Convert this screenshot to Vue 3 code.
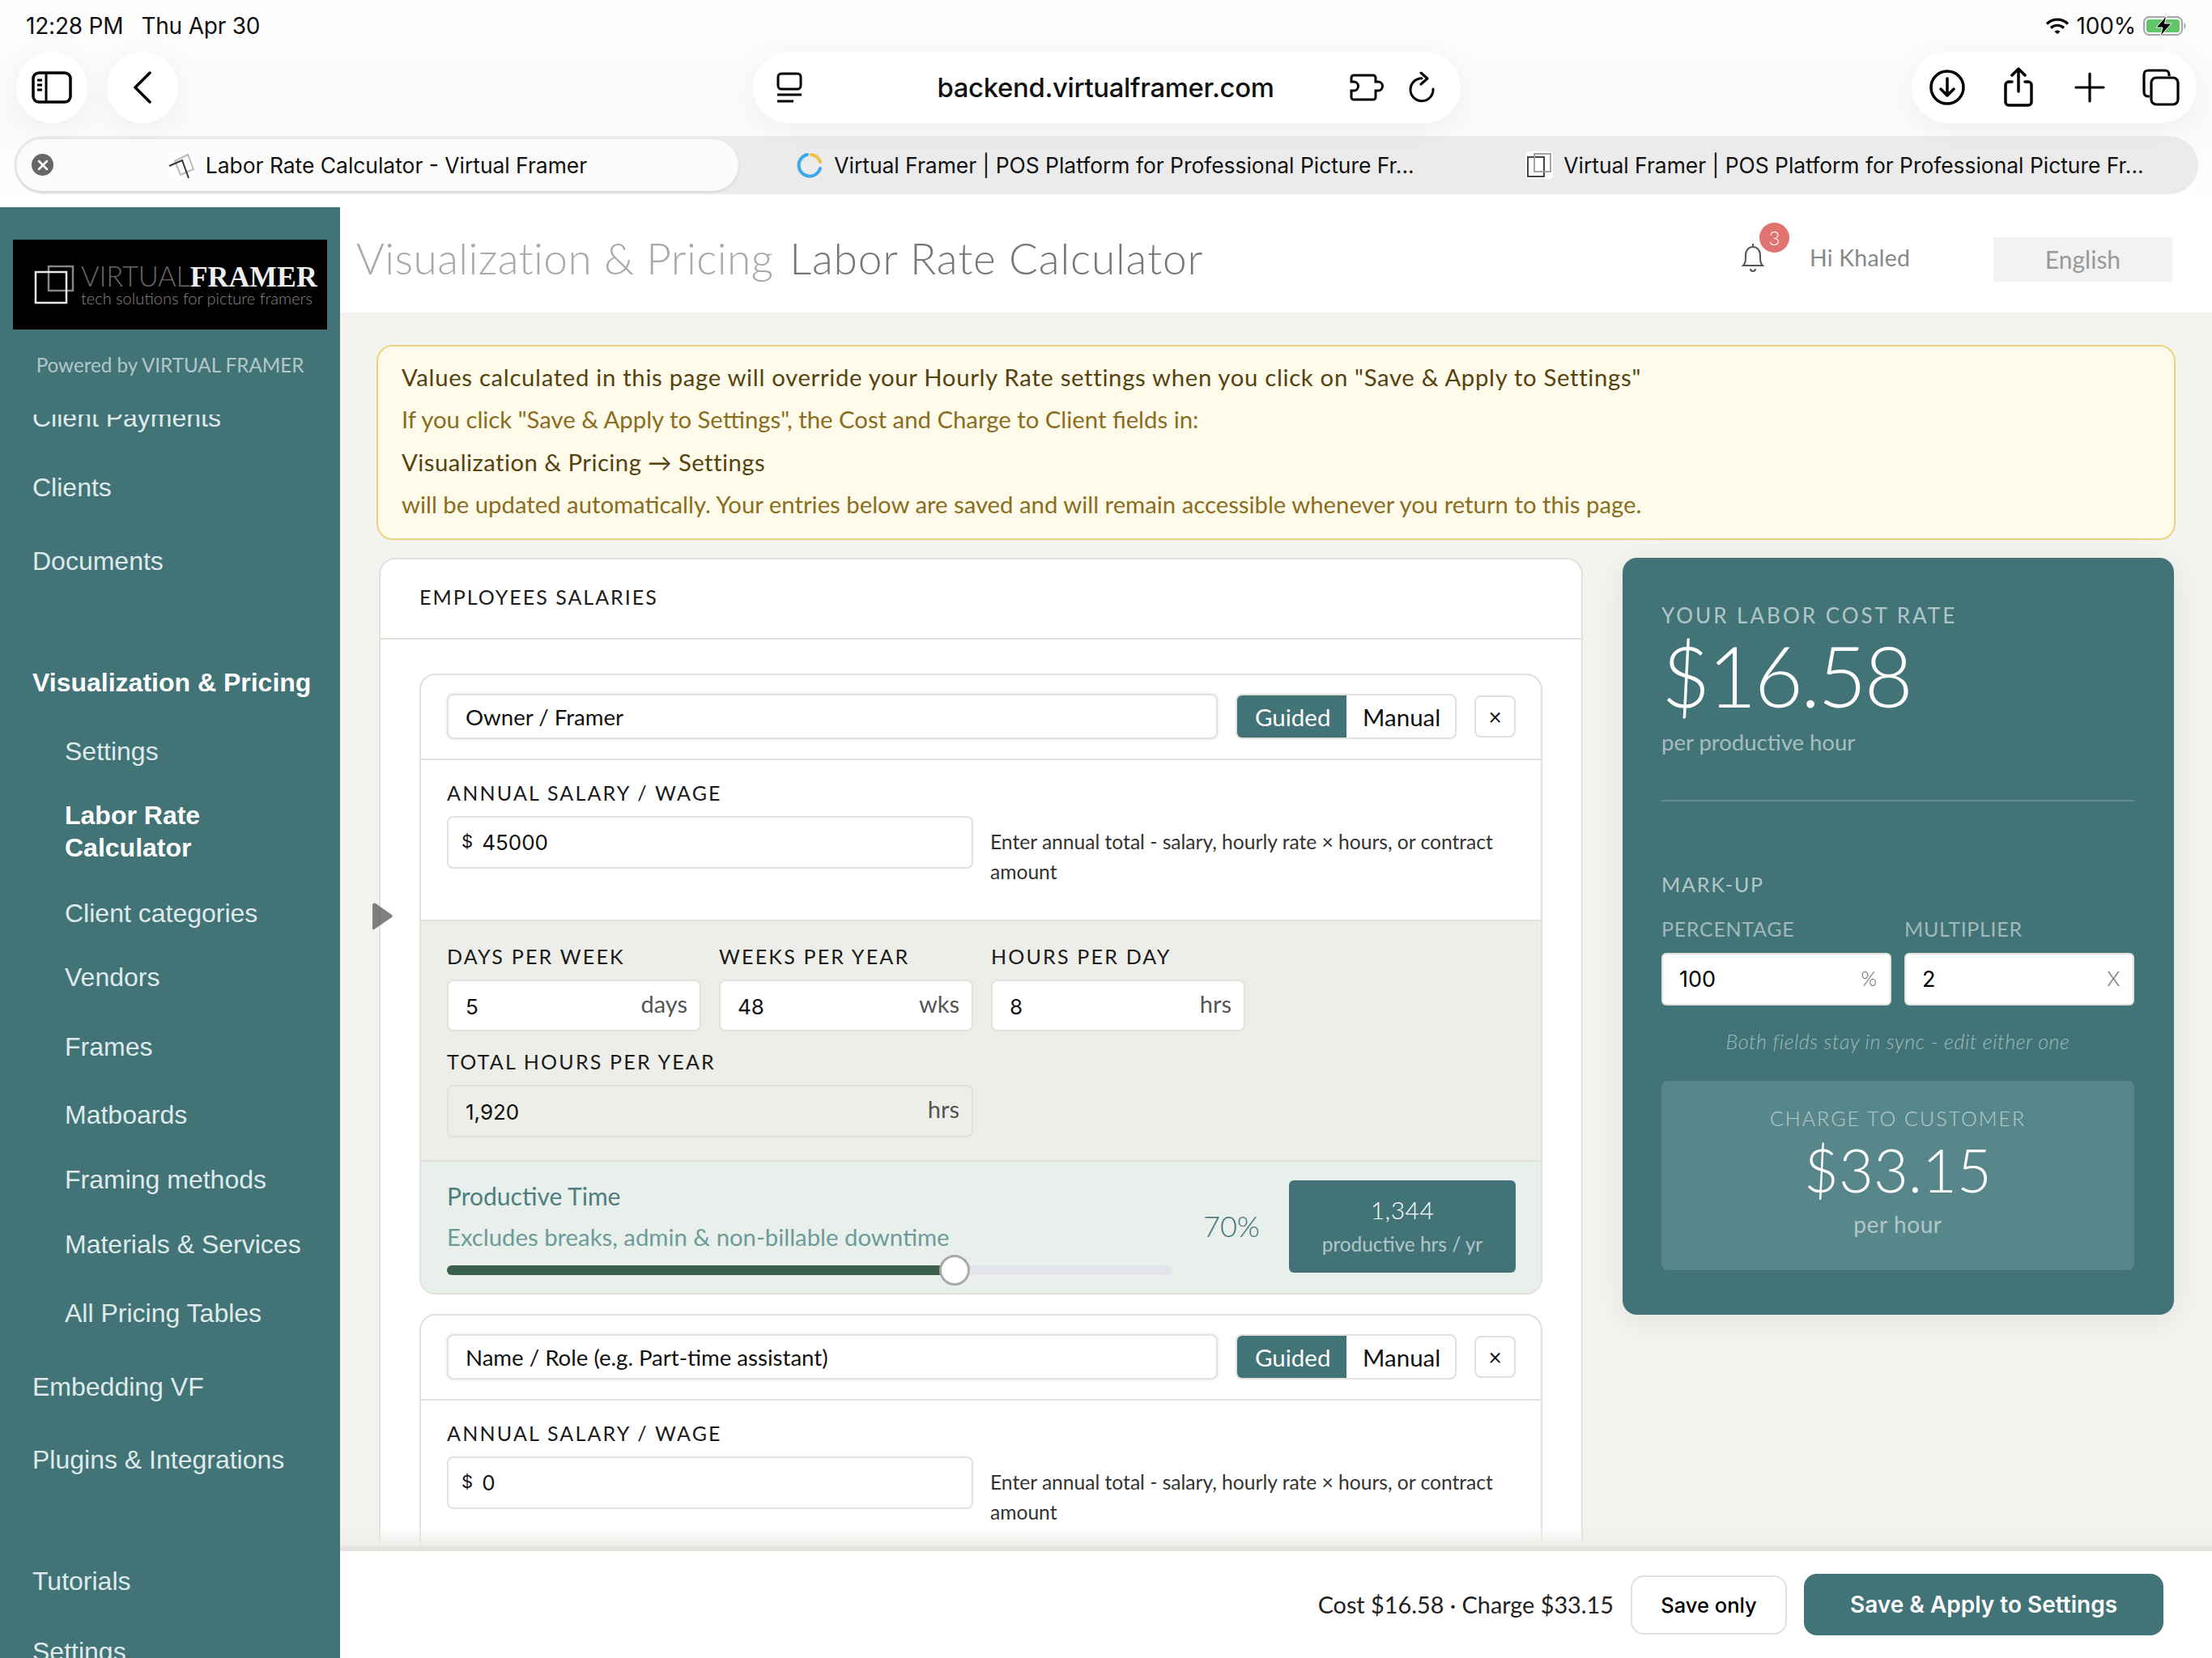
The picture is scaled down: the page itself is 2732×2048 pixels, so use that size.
<template>
  <div class="screen">
    <!-- safari chrome -->
    <header class="chrome">
      <div class="status">
        <div class="status-left"><span>12:28 PM</span><span>Thu Apr 30</span></div>
        <div class="status-right">
          <svg width="30" height="20" viewBox="0 0 30 20" fill="none" stroke="#000" stroke-width="3.200"><path d="M2 7.500a18.500 18.500 0 0 1 26 0"/><path d="M7 12.500a11.500 11.500 0 0 1 16 0"/><path d="M11.500 17a5 5 0 0 1 7 0L15 20z" fill="#000" stroke="none"/></svg>
          <span class="pct">100%</span>
          <svg width="54" height="26" viewBox="0 0 54 26">
            <rect x="1" y="2" width="47" height="22" rx="6.500" fill="none" stroke="#a6a6a6" stroke-width="2"/>
            <rect x="4" y="5" width="41" height="16" rx="3.500" fill="#62c668"/>
            <path d="M50.500 9c2.500 1 2.500 7 0 8z" fill="#a6a6a6"/>
            <path d="M29 0 16 15h8l-3 11 14-16h-8.500z" fill="#000" stroke="#fff" stroke-width="1"/>
          </svg>
        </div>
      </div>

      <div class="toolbar">
        <div class="tool-left">
          <button class="round">
            <svg width="50" height="40" viewBox="0 0 50 40" fill="none" stroke="#000" stroke-width="3.500"><rect x="2" y="2" width="46" height="36" rx="7"/><path d="M18 2v36M7 11h6M7 17h6M7 23h6" stroke-width="3"/></svg>
          </button>
          <button class="round">
            <svg width="24" height="40" viewBox="0 0 24 40" fill="none" stroke="#000" stroke-width="3.500" stroke-linecap="round" stroke-linejoin="round"><path d="M21 2 3 20l18 18"/></svg>
          </button>
        </div>
        <div class="url-pill">
          <svg width="32" height="38" viewBox="0 0 32 38" fill="none" stroke="#000" stroke-width="3"><rect x="2" y="2" width="28" height="19" rx="4"/><path d="M1 28h30" /><path d="M1 36h20"/></svg>
          <span class="url-text">backend.virtualframer.com</span>
          <svg width="42" height="34" viewBox="0 0 42 34" fill="none" stroke="#000" stroke-width="3"><path d="M5 2h24a3 3 0 0 1 3 3v5h3a5.500 5.500 0 0 1 0 11h-3v8a3 3 0 0 1-3 3H5a3 3 0 0 1-3-3v-8h3a5.500 5.500 0 0 0 0-11H2V5a3 3 0 0 1 3-3z"/></svg>
          <svg class="reload" width="34" height="40" viewBox="0 0 34 40" fill="none" stroke="#000" stroke-width="3" stroke-linecap="round" stroke-linejoin="round"><path d="M17 8.700A14 14 0 1 0 31 22"/><path d="M16 2l8 7-8 7"/></svg>
        </div>
        <div class="tool-right">
          <button class="slot">
            <svg width="46" height="46" viewBox="0 0 46 46" fill="none" stroke="#000" stroke-width="3.500" stroke-linecap="round" stroke-linejoin="round"><circle cx="23" cy="23" r="20"/><path d="M23 12v21M15 25l8 8 8-8"/></svg>
          </button>
          <button class="slot">
            <svg width="38" height="50" viewBox="0 0 38 50" fill="none" stroke="#000" stroke-width="3.500" stroke-linecap="round" stroke-linejoin="round"><path d="M11 18H7a4 4 0 0 0-4 4v21a4 4 0 0 0 4 4h24a4 4 0 0 0 4-4V22a4 4 0 0 0-4-4h-4M19 30V3M11 10l8-8 8 8"/></svg>
          </button>
          <button class="slot">
            <svg width="38" height="38" viewBox="0 0 38 38" fill="none" stroke="#000" stroke-width="3.200" stroke-linecap="round"><path d="M19 2v34M2 19h34"/></svg>
          </button>
          <button class="slot">
            <svg width="46" height="46" viewBox="0 0 46 46" fill="none" stroke="#000" stroke-width="3.200"><path d="M9 34H7a5 5 0 0 1-5-5V7a5 5 0 0 1 5-5h21a5 5 0 0 1 5 5v2"/><rect x="11" y="11" width="33" height="33" rx="6"/></svg>
          </button>
        </div>
      </div>

      <div class="tabbar">
        <div class="tab active">
          <span class="tab-close">
            <svg width="14" height="14" viewBox="0 0 14 14" stroke="#fff" stroke-width="2.500" stroke-linecap="round"><path d="M2 2l10 10M12 2 2 12"/></svg>
          </span>
          <svg width="34" height="36" viewBox="0 0 34 36" fill="none"><rect width="34" height="36" rx="4" fill="#fff"/><path d="M9 13 25 5l7 18-16 7z" stroke="#bbb" stroke-width="2"/><path d="M2 19l16-7 8 22" stroke="#333" stroke-width="2"/></svg>
          <span>Labor Rate Calculator - Virtual Framer</span>
        </div>
        <div class="tab second">
          <svg width="34" height="34" viewBox="0 0 34 34" fill="none" stroke-width="4" stroke-linecap="round"><path d="M19 4a13.500 13.500 0 0 1 11 9" stroke="#f0c040"/><path d="M30 21A13.500 13.500 0 1 1 14 4" stroke="#3fa7ee"/></svg>
          <span>Virtual Framer | POS Platform for Professional Picture Fr...</span>
        </div>
        <div class="tab third">
          <svg width="34" height="34" viewBox="0 0 34 34" fill="none"><rect width="34" height="34" rx="4" fill="#fff"/><rect x="3" y="7" width="20" height="24" stroke="#333" stroke-width="1.800"/><rect x="11" y="3" width="20" height="22" stroke="#999" stroke-width="1.800"/></svg>
          <span>Virtual Framer | POS Platform for Professional Picture Fr...</span>
        </div>
      </div>
    </header>

    <div class="main">
      <aside class="sidebar">
        <div class="logo">
          <svg width="50" height="50" viewBox="0 0 50 50" fill="none"><rect x="18" y="2" width="30" height="30" stroke="#8b8285" stroke-width="2.500"/><rect x="2" y="9" width="38" height="38" stroke="#e9e9e9" stroke-width="2.500"/></svg>
          <div class="logo-text">
            <div class="logo-name"><span class="thin">VIRTUAL</span><span class="serif">FRAMER</span></div>
            <div class="logo-tag">tech solutions for picture framers</div>
          </div>
        </div>
        <div class="powered">Powered by VIRTUAL FRAMER</div>
        <nav class="nav">
          <div
            v-for="item in navItems"
            :key="item.label + item.gap"
            class="nav-item"
            :class="{ sub: item.sub, bold: item.bold, wrap: item.wrap }"
            :style="{ marginTop: item.gap + 'px' }"
          >{{ item.label }}</div>
        </nav>
      </aside>

      <section class="content">
        <div class="page-head">
          <h1><span class="crumb">Visualization &amp; Pricing</span><span class="page-name">Labor Rate Calculator</span></h1>
          <div class="head-right">
            <div class="bell">
              <svg width="32" height="38" viewBox="0 0 32 38" fill="none" stroke="#555" stroke-width="2"><path d="M4 29c3-3 3-6 3-13 0-6 4-10 9-10s9 4 9 10c0 7 0 10 3 13z"/><path d="M13 33a3 3 0 0 0 6 0M16 2v4"/></svg>
              <span class="badge">3</span>
            </div>
            <span class="hello">Hi Khaled</span>
            <div class="lang">English</div>
          </div>
        </div>

        <div class="scroll">
          <div class="notice">
            <p class="strong">Values calculated in this page will override your Hourly Rate settings when you click on "Save &amp; Apply to Settings"</p>
            <p>If you click "Save &amp; Apply to Settings", the Cost and Charge to Client fields in:</p>
            <p class="strong path">Visualization &amp; Pricing → Settings</p>
            <p>will be updated automatically. Your entries below are saved and will remain accessible whenever you return to this page.</p>
          </div>

          <div class="columns">
            <div class="card">
              <div class="card-title">EMPLOYEES SALARIES</div>
              <div class="card-body">
                <div v-for="emp in employees" :key="emp.name" class="employee">
                  <div class="emp-head">
                    <div class="field name-field">{{ emp.name }}</div>
                    <div class="toggle">
                      <span class="on">Guided</span>
                      <span>Manual</span>
                    </div>
                    <button class="remove">×</button>
                  </div>
                  <div class="emp-salary">
                    <label>ANNUAL SALARY / WAGE</label>
                    <div class="salary-row">
                      <div class="field money"><small>$</small>{{ emp.salary }}</div>
                      <p class="hint">Enter annual total - salary, hourly rate × hours, or contract amount</p>
                    </div>
                  </div>
                  <div class="emp-hours">
                    <div class="hours-grid">
                      <div v-for="h in emp.hours" :key="h.label">
                        <label>{{ h.label }}</label>
                        <div class="field unit-field">{{ h.value }}<em>{{ h.unit }}</em></div>
                      </div>
                    </div>
                    <label class="total-label">TOTAL HOURS PER YEAR</label>
                    <div class="field unit-field total">{{ emp.total }}<em>hrs</em></div>
                  </div>
                  <div class="emp-prod">
                    <div class="prod-left">
                      <div class="prod-title">Productive Time</div>
                      <div class="prod-sub">Excludes breaks, admin &amp; non-billable downtime</div>
                      <div class="track">
                        <div class="fill" :style="{ width: emp.pct + '%' }"></div>
                        <div class="thumb" :style="{ left: emp.pct + '%' }"></div>
                      </div>
                    </div>
                    <div class="prod-pct">{{ emp.pct }}%</div>
                    <div class="prod-box">
                      <strong>{{ emp.productive }}</strong>
                      <span>productive hrs / yr</span>
                    </div>
                  </div>
                </div>
              </div>
            </div>

            <div class="panel">
              <div class="panel-label">YOUR LABOR COST RATE</div>
              <div class="cost">$16.58</div>
              <div class="per">per productive hour</div>
              <div class="panel-line"></div>
              <div class="markup">MARK-UP</div>
              <div class="markup-grid">
                <div>
                  <div class="mini">PERCENTAGE</div>
                  <div class="panel-input">100<em>%</em></div>
                </div>
                <div>
                  <div class="mini">MULTIPLIER</div>
                  <div class="panel-input">2<em>X</em></div>
                </div>
              </div>
              <div class="sync">Both fields stay in sync - edit either one</div>
              <div class="charge">
                <div class="charge-label">CHARGE TO CUSTOMER</div>
                <div class="charge-value">$33.15</div>
                <div class="charge-per">per hour</div>
              </div>
            </div>
          </div>

          <!-- drag handle that floats over the page edge -->
          <svg class="handle" width="28" height="34" viewBox="0 0 28 34"><path d="M2 3c0-2 2-3 4-2l20 14c1 1 1 2 0 3L4 33c-1 1-2 0-2-2z" fill="rgba(80,80,80,.72)"/></svg>
          <div class="fade"></div>
        </div>

        <footer class="footer">
          <span class="summary">Cost $16.58 · Charge $33.15</span>
          <button class="btn-ghost">Save only</button>
          <button class="btn-main">Save &amp; Apply to Settings</button>
        </footer>
      </section>
    </div>
  </div>
</template>

<script setup>
import { ref } from 'vue'

const navItems = ref([
  { label: 'Client Payments', gap: -16 },
  { label: 'Clients', gap: 46 },
  { label: 'Documents', gap: 51 },
  { label: 'Visualization & Pricing', gap: 110, bold: true },
  { label: 'Settings', gap: 45, sub: true },
  { label: 'Labor Rate Calculator', gap: 39, sub: true, bold: true, wrap: true },
  { label: 'Client categories', gap: 41, sub: true },
  { label: 'Vendors', gap: 39, sub: true },
  { label: 'Frames', gap: 46, sub: true },
  { label: 'Matboards', gap: 44, sub: true },
  { label: 'Framing methods', gap: 40, sub: true },
  { label: 'Materials & Services', gap: 40, sub: true },
  { label: 'All Pricing Tables', gap: 45, sub: true },
  { label: 'Embedding VF', gap: 51 },
  { label: 'Plugins & Integrations', gap: 50 },
  { label: 'Tutorials', gap: 110 },
  { label: 'Settings', gap: 47 },
])

const makeHours = (d, w, h) => [
  { label: 'DAYS PER WEEK', value: d, unit: 'days' },
  { label: 'WEEKS PER YEAR', value: w, unit: 'wks' },
  { label: 'HOURS PER DAY', value: h, unit: 'hrs' },
]

const employees = ref([
  { name: 'Owner / Framer', salary: '45000', hours: makeHours(5, 48, 8), total: '1,920', pct: 70, productive: '1,344' },
  { name: 'Name / Role (e.g. Part-time assistant)', salary: '0', hours: makeHours(5, 48, 8), total: '1,920', pct: 70, productive: '1,344' },
])
</script>

<style>
html, body { margin: 0; background: #fff; }
</style>

<style scoped>
* { box-sizing: border-box; }
.screen { width: 2732px; height: 2048px; overflow: hidden; display: flex; flex-direction: column; font-family: Lato, "Liberation Sans", sans-serif; color: #111; background: #fff; }
button { font: inherit; padding: 0; border: 0; background: none; color: inherit; }

/* chrome */
.chrome { height: 256px; flex: none; background: linear-gradient(#fdfdfd, #fafafa 60%, #fff); font-family: Inter, "Liberation Sans", sans-serif; }
.status { height: 64px; display: flex; justify-content: space-between; align-items: center; padding: 0 31px 0 32px; font-size: 28px; }
.status-left { display: flex; gap: 22px; letter-spacing: -.2px; }
.status-right { display: flex; align-items: center; gap: 9px; }
.pct { letter-spacing: -.2px; }
.toolbar { height: 88px; display: grid; grid-template-columns: 1fr 874px 1fr; align-items: center; padding: 0 19px 0 20px; }
.tool-left { display: flex; gap: 24px; }
.round { width: 88px; height: 88px; border-radius: 50%; background: #fff; display: flex; align-items: center; justify-content: center; box-shadow: 0 6px 36px rgba(0,0,0,.05); }
.url-pill { height: 88px; border-radius: 44px; background: #fff; display: flex; align-items: center; padding: 0 31px 0 29px; box-shadow: 0 6px 36px rgba(0,0,0,.05); }
.url-text { flex: 1; text-align: center; font-size: 32.800px; font-weight: 500; letter-spacing: -.3px; padding-left: 74px; }
.reload { margin-left: 30px; }
.tool-right { justify-self: end; width: 352px; height: 88px; border-radius: 44px; background: #fff; display: flex; box-shadow: 0 6px 36px rgba(0,0,0,.05); }
.slot { width: 88px; height: 88px; display: flex; align-items: center; justify-content: center; }
.tabbar { height: 72px; margin: 16px 17px 0; padding: 4px 3px; border-radius: 36px; background: #ebebeb; display: flex; }
.tab { width: 892px; height: 64px; border-radius: 32px; display: flex; align-items: center; justify-content: center; gap: 13px; font-size: 26.400px; position: relative; white-space: nowrap; }
.tab.active { background: #fbfbfb; box-shadow: 0 1px 3px rgba(0,0,0,.12); }
.tab.second { margin-left: 7px; }
.tab.third { margin-left: 9px; }
.tab-close { position: absolute; left: 19px; top: 18px; width: 27px; height: 27px; border-radius: 50%; background: #666; display: flex; align-items: center; justify-content: center; }

.main { flex: 1; min-height: 0; display: flex; }

/* sidebar */
.sidebar { width: 420px; flex: none; background: #417377; display: flex; flex-direction: column; overflow: hidden; }
.logo { margin: 40px 16px 0; height: 111px; background: #000; display: flex; align-items: center; gap: 8px; padding-left: 26px; }
.logo-text { width: 296px; }
.logo-name { display: flex; align-items: baseline; line-height: 33px; height: 33px; }
.thin { font-weight: 300; font-size: 34.500px; color: #6b6767; letter-spacing: -.2px; }
.serif { font-family: "Liberation Serif", serif; font-size: 35.800px; font-weight: 700; color: #efefef; }
.logo-tag { font-weight: 300; font-size: 20px; color: #8a8585; line-height: 22px; white-space: nowrap; }
.powered { margin-top: 25px; text-align: center; color: rgba(255,255,255,.62); font-size: 24.200px; line-height: 38px; height: 80px; }
.nav { flex: 1; min-height: 0; overflow: hidden; font-family: "Liberation Sans", sans-serif; font-size: 32px; line-height: 40px; color: #dfeaea; }
.nav-item { padding: 0 0 0 40px; white-space: nowrap; }
.nav-item.sub { padding-left: 80px; }
.nav-item.wrap { white-space: normal; padding-right: 120px; }
.nav-item.bold { font-weight: 700; color: #fff; }

/* content */
.content { flex: 1; min-width: 0; display: flex; flex-direction: column; background: #f3f4f0; }
.page-head { height: 130px; flex: none; background: #fff; display: flex; align-items: center; justify-content: space-between; padding: 0 49px 6px 20px; }
h1 { margin: 0; font-weight: 300; font-size: 53.200px; display: flex; gap: 20px; letter-spacing: .4px; white-space: nowrap; }
.crumb { color: #a9a9a9; }
.page-name { color: #777; letter-spacing: .85px; }
.head-right { display: flex; align-items: center; }
.bell { position: relative; width: 32px; height: 38px; margin-right: 54px; }
.badge { position: absolute; left: 24px; top: -24px; width: 37px; height: 37px; border-radius: 50%; background: #e07272; color: #fff; font-size: 24px; font-weight: 300; display: flex; align-items: center; justify-content: center; }
.hello { font-size: 28.500px; color: #888; width: 227px; letter-spacing: .2px; }
.lang { width: 221px; height: 55px; margin-top: 4px; background: #f2f2f2; color: #999; font-size: 30px; display: flex; align-items: center; justify-content: center; }

.scroll { flex: 1; min-height: 0; overflow: hidden; position: relative; padding: 40px 45px 0; }
.notice { border: 2px solid #e8d283; background: #fefbeb; border-radius: 20px; padding: 12px 29px 0; height: 241px; font-size: 29.300px; line-height: 52.300px; color: #8a6d20; }
.notice p { margin: 0; white-space: nowrap; }
.notice .strong { color: #56420f; letter-spacing: .68px; }
.notice .path { letter-spacing: .45px; }
.columns { display: grid; grid-template-columns: 1487px 681px; column-gap: 49px; margin: 22px 0 0 3px; align-items: start; }

.card { background: #fff; border: 2px solid #e2e0da; border-radius: 20px; }
.card-title { height: 99px; padding: 0 0 5px 48px; display: flex; align-items: center; font-size: 25px; letter-spacing: 2px; border-bottom: 2px solid #e2e0da; color: #1a1a1a; }
.card-body { padding: 42px 48px; }
.employee { border: 2px solid #e2e0da; border-radius: 20px; overflow: hidden; margin-bottom: 24px; }
.emp-head { display: flex; align-items: center; gap: 22px; padding: 23px 31px 24px 32px; border-bottom: 2px solid #e2e0da; }
.field { background: #fff; border: 2px solid #e2e0da; border-radius: 8px; font-size: 27.600px; display: flex; align-items: center; }
.name-field { width: 953px; height: 56px; padding-left: 21px; box-shadow: 0 0 0 2px #f6f6f3; white-space: nowrap; }
.toggle { width: 273px; height: 56px; border: 2px solid #e2e0da; border-radius: 8px; display: flex; font-size: 29.500px; overflow: hidden; }
.toggle span { flex: 1; display: flex; align-items: center; justify-content: center; padding-left: 2px; }
.toggle .on { flex: none; width: 135px; background: #417377; color: #fff; }
.remove { width: 51px; height: 52px; border: 2px solid #e2e0da; border-radius: 8px; font-size: 28px; background: #fff; }
label { display: block; font-size: 25px; line-height: 34px; letter-spacing: 2.200px; color: #1a1a1a; }
.emp-salary { padding: 23px 31px 41px 32px; }
.salary-row { display: flex; align-items: flex-start; gap: 21px; margin-top: 12px; }
.money { width: 650px; height: 65px; padding-left: 16px; flex: none; font-family: Inter, sans-serif; font-size: 26px; }
.money small { font-size: 22px; margin-right: 11px; position: relative; top: -2px; }
.hint { margin: 13px 0 0; font-size: 24.600px; line-height: 37px; color: #333; }
.emp-hours { background: #edeee9; border-top: 2px solid #e2e0da; padding: 26px 31px 28px 32px; }
.hours-grid { display: grid; grid-template-columns: repeat(3, 314px); column-gap: 22px; }
.hours-grid label { margin-bottom: 12px; }
.unit-field { height: 64px; padding: 2px 15px 0 21px; justify-content: space-between; font-size: 26px; font-family: Inter, sans-serif; }
.unit-field em { font-family: Lato, sans-serif; font-size: 29px; font-style: normal; color: #555; position: relative; top: -4px; }
.total-label { margin: 20px 0 12px; }
.total { width: 650px; height: 65px; background: #edeee9; }
.emp-prod { background: #e9efeb; border-top: 2px solid #e2e0da; height: 164px; padding: 23px 31px 0 32px; display: flex; }
.prod-left { width: 896px; flex: none; }
.prod-title { font-size: 30px; line-height: 40px; color: #4d7f80; margin-top: -1px; }
.prod-sub { font-size: 29.300px; line-height: 40px; margin-top: 11px; color: #6d9b99; white-space: nowrap; }
.track { position: relative; height: 12px; margin-top: 15px; background: #e3e5ea; border-radius: 6px; }
.fill { height: 12px; border-radius: 6px 0 0 6px; background: #3a5f4b; }
.thumb { position: absolute; top: -13px; width: 38px; height: 38px; margin-left: -19px; background: #fff; border: 3px solid #aaa; border-radius: 50%; }
.prod-pct { width: 69px; margin-left: 38px; font-size: 36px; font-weight: 300; color: #417377; line-height: 112px; white-space: nowrap; }
.prod-box { width: 280px; height: 114px; margin-left: 37px; background: #417377; border-radius: 6px; color: #fff; display: flex; flex-direction: column; align-items: center; }
.prod-box strong { font-weight: 300; font-size: 30px; line-height: 40px; margin-top: 16px; letter-spacing: .5px; }
.prod-box span { font-size: 24.400px; line-height: 30px; margin-top: 8px; color: rgba(255,255,255,.62); }

/* right panel */
.panel { background: #417377; border-radius: 18px; padding: 56px 49px 55px 48px; color: #fff; box-shadow: 0 8px 40px rgba(0,0,0,.08); }
.panel-label { font-size: 26px; line-height: 30px; letter-spacing: 3px; color: rgba(255,255,255,.62); }
.cost { font-size: 104px; font-weight: 300; line-height: 110px; margin-top: 4px; letter-spacing: -3px; }
.per { font-size: 27.500px; line-height: 34px; margin-top: 11px; color: rgba(255,255,255,.55); }
.panel-line { height: 2px; margin-top: 54px; background: rgba(255,255,255,.18); }
.markup { font-size: 25px; line-height: 30px; margin-top: 87px; letter-spacing: 1.800px; color: rgba(255,255,255,.62); }
.markup-grid { display: grid; grid-template-columns: 284px 284px; column-gap: 16px; margin-top: 25px; }
.mini { font-size: 25px; line-height: 30px; letter-spacing: .7px; color: rgba(255,255,255,.5); }
.panel-input { height: 65px; margin-top: 15px; background: #fff; border: 2px solid #e2e0da; border-radius: 6px; padding: 0 16px 0 20px; display: flex; align-items: center; justify-content: space-between; color: #000; font-family: Inter, sans-serif; font-size: 27px; }
.panel-input em { font-family: Lato, sans-serif; font-weight: 300; font-style: normal; color: #666; font-size: 25px; position: relative; top: -2px; }
.sync { margin-top: 29px; text-align: center; font-size: 25px; line-height: 30px; font-style: italic; font-weight: 300; color: rgba(255,255,255,.5); letter-spacing: .6px; }
.charge { margin-top: 34px; height: 234px; background: #58878b; border-radius: 8px; text-align: center; padding-top: 31px; }
.charge-label { font-size: 25px; line-height: 30px; letter-spacing: 2px; color: rgba(255,255,255,.58); font-weight: 300; }
.charge-value { font-size: 74px; font-weight: 300; line-height: 76px; margin-top: 11px; }
.charge-per { font-size: 28px; line-height: 34px; margin-top: 12px; color: rgba(255,255,255,.55); letter-spacing: .6px; }

.handle { position: absolute; left: 38px; top: 729px; }
.fade { position: absolute; left: 0; right: 0; bottom: 0; height: 24px; background: linear-gradient(rgba(236,236,232,0), rgba(236,236,232,.95)); }

/* footer */
.footer { height: 138px; flex: none; background: #fff; border-top: 6px solid #e5e4df; display: flex; align-items: center; justify-content: flex-end; gap: 21px; padding-right: 60px; position: relative; }
.summary { font-size: 28.800px; color: #222; }
.btn-ghost { width: 193px; height: 73px; border: 2px solid #e2e0da; border-radius: 16px; background: #fff; font-family: Inter, sans-serif; font-size: 25.500px; font-weight: 500; color: #000; }
.btn-main { width: 444px; height: 76px; border-radius: 16px; background: #417377; color: #fff; font-family: Inter, sans-serif; font-size: 28px; font-weight: 600; }
</style>
